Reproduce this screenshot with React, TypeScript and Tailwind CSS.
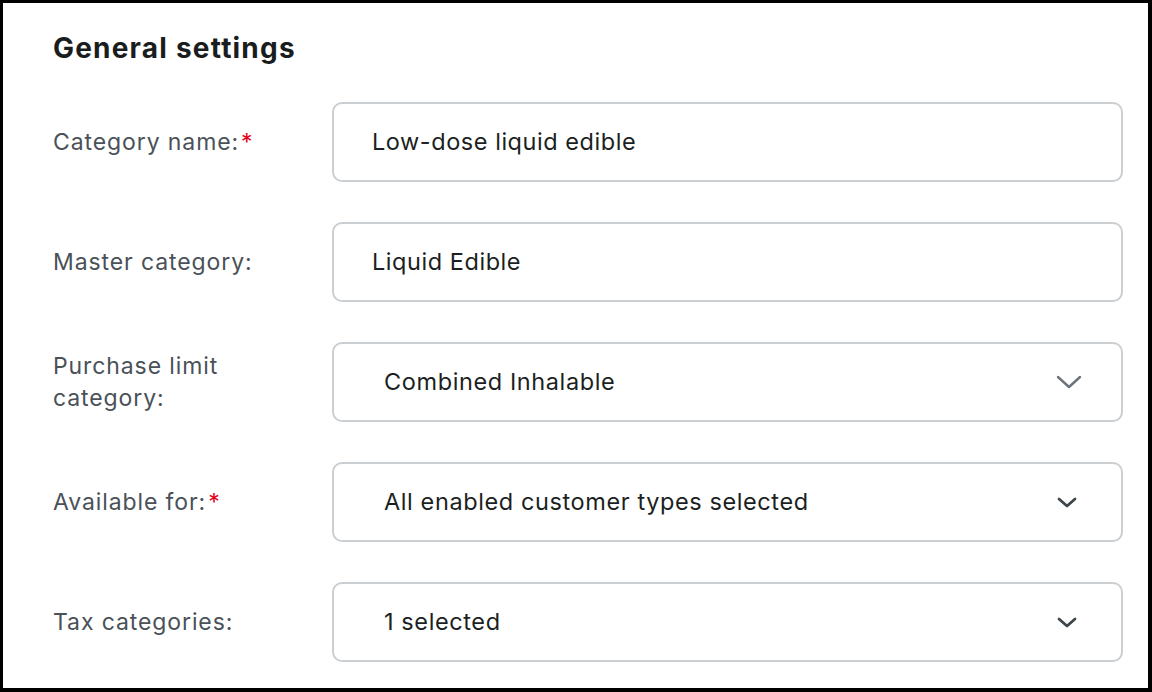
import type { ReactNode } from "react";

const FONT = "font-['Inter','Liberation_Sans',sans-serif]";

function Chevron({ variant }: { variant: "light" | "dark" }) {
  if (variant === "light") {
    return (
      <svg width="26" height="14" viewBox="0 0 26 14" fill="none" className="text-[#6d7479]">
        <path d="M2 2l11 10 11-10" stroke="currentColor" strokeWidth="2.4" strokeLinecap="round" strokeLinejoin="round" />
      </svg>
    );
  }
  return (
    <svg width="20" height="11" viewBox="0 0 20 11" fill="none" className="text-[#3e464c]">
      <path d="M2 2l8 7 8-7" stroke="currentColor" strokeWidth="2.8" strokeLinecap="round" strokeLinejoin="round" />
    </svg>
  );
}

function Row({
  label,
  required,
  children,
}: {
  label: ReactNode;
  required?: boolean;
  children: ReactNode;
}) {
  return (
    <div className="grid grid-cols-[279px_1fr] items-center">
      <div className="text-[23px] leading-[32px] tracking-[0.9px] text-[#4a5158]">
        {label}
        {required && <span className="ml-[2px] text-[#e3001b]">*</span>}
      </div>
      {children}
    </div>
  );
}

function TextBox({ value }: { value: string }) {
  return (
    <div className="flex h-[80px] items-center rounded-[10px] border-2 border-[#cbcfd2] pl-[38px] text-[23.5px] tracking-[0.55px] text-[#1c1f22]">
      {value}
    </div>
  );
}

function SelectBox({ value, chevron }: { value: string; chevron: "light" | "dark" }) {
  return (
    <div className="flex h-[80px] items-center justify-between rounded-[10px] border-2 border-[#cbcfd2] pl-[50px] text-[23.5px] tracking-[0.6px] text-[#1c1f22]">
      <span>{value}</span>
      <span className={chevron === "light" ? "mr-[39px]" : "mr-[44px]"}>
        <Chevron variant={chevron} />
      </span>
    </div>
  );
}

export default function App() {
  return (
    <div
      className={`${FONT} h-[692px] w-[1152px] overflow-hidden border-b-[4px] border-l-[3px] border-r-[4px] border-t-[3px] border-black bg-white`}
    >
      <div className="pl-[50px] pr-[25px] pt-[28px]">
        <h2 className="text-[28px] font-bold leading-[34px] tracking-[1.2px] text-[#1a1d20]">
          General settings
        </h2>
        <div className="mt-[37px] flex flex-col gap-[40px]">
          <Row label="Category name:" required>
            <TextBox value="Low-dose liquid edible" />
          </Row>
          <Row label="Master category:">
            <TextBox value="Liquid Edible" />
          </Row>
          <Row
            label={
              <>
                Purchase limit
                <br />
                category:
              </>
            }
          >
            <SelectBox value="Combined Inhalable" chevron="light" />
          </Row>
          <Row label="Available for:" required>
            <SelectBox value="All enabled customer types selected" chevron="dark" />
          </Row>
          <Row label="Tax categories:">
            <SelectBox value="1 selected" chevron="dark" />
          </Row>
        </div>
      </div>
    </div>
  );
}
